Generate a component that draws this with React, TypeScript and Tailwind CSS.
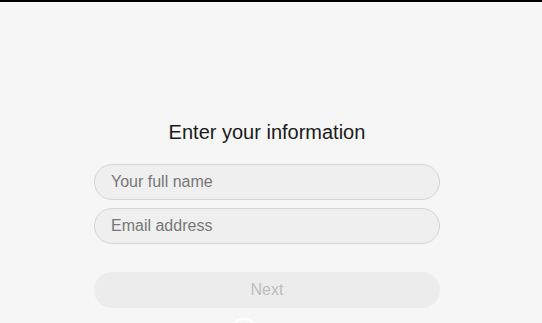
import { useEffect, useRef } from 'react';

export default function App() {
  const nameRef = useRef<HTMLInputElement>(null);

  useEffect(() => {
    nameRef.current?.focus();
  }, []);

  return (
    <div className="w-[542px] h-[323px] overflow-hidden bg-[#f6f6f6] border-t-2 border-black font-['Liberation_Sans',Arial,sans-serif]">
      <div className="w-[346px] ml-[94px] pt-[118px] flex flex-col">
        <h1 className="text-[20px] leading-[24px] text-[#1a1a1a] text-center">Enter your information</h1>

        <div className="mt-[20px] flex flex-col gap-[8px]">
          <input
            ref={nameRef}
            type="text"
            placeholder="Your full name"
            className="h-[36px] rounded-full border border-[#d4d4d4] bg-[#efefef] px-4 text-[16px] text-[#333] placeholder:text-[#777] outline-none caret-black"
          />
          <input
            type="email"
            placeholder="Email address"
            className="h-[36px] rounded-full border border-[#d4d4d4] bg-[#efefef] px-4 text-[16px] text-[#333] placeholder:text-[#777] outline-none"
          />
        </div>

        <button
          disabled
          className="mt-[28px] h-[36px] rounded-full bg-[#ececec] text-[16px] text-[#bdbdbd]"
        >
          Next
        </button>

        <div className="mt-[10px] ml-[136px] w-[28px] h-[28px] rounded-full border-2 border-white" />
      </div>
    </div>
  );
}
